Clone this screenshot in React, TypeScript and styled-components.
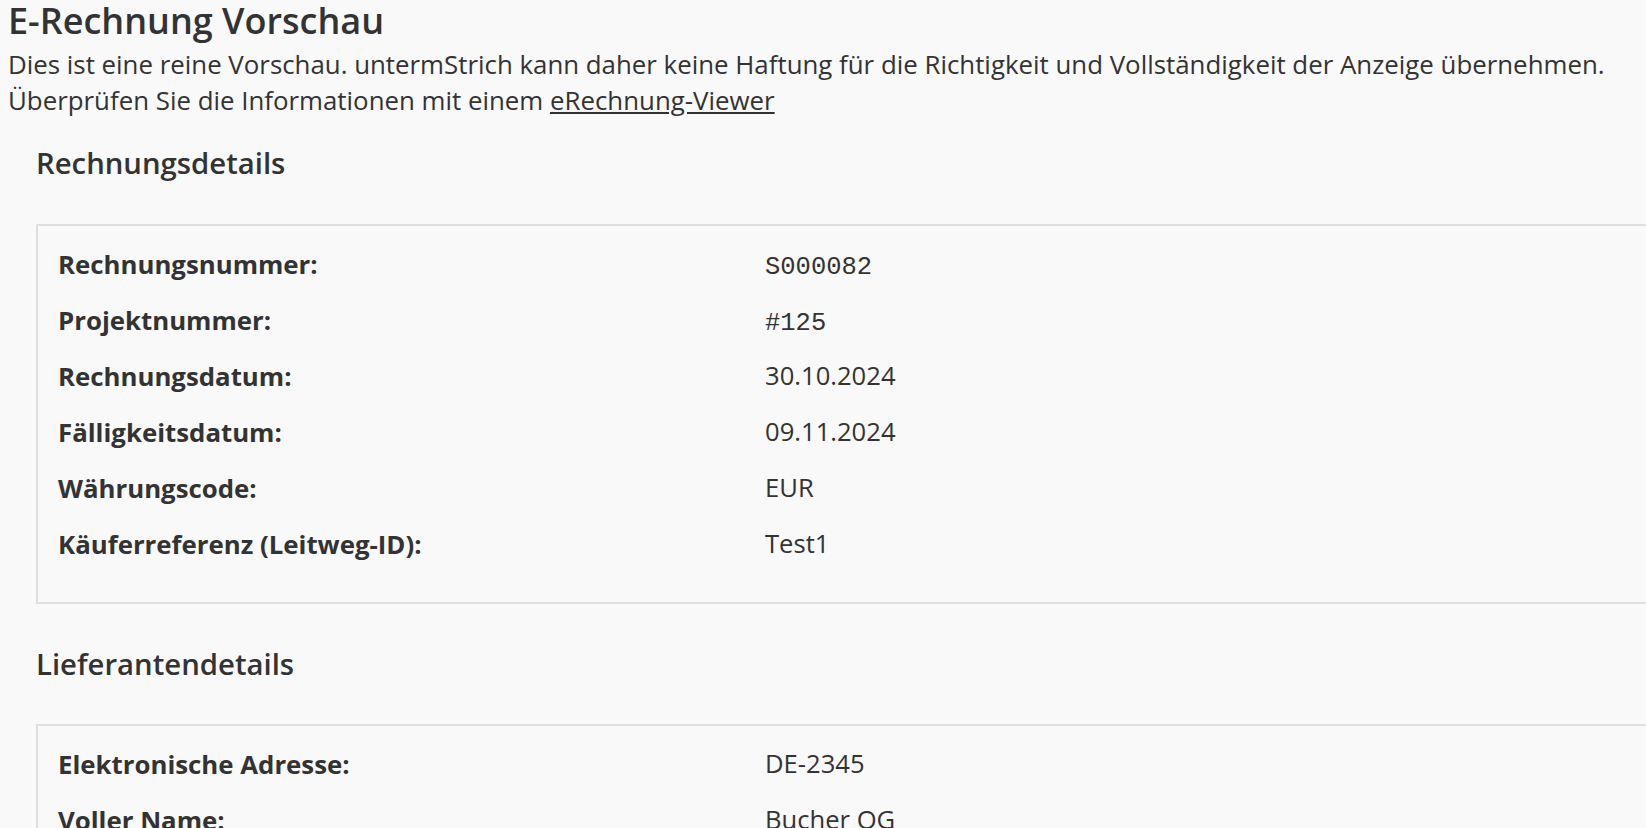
import React from "react";
import styled, { createGlobalStyle } from "styled-components";

const GlobalStyle = createGlobalStyle`
  html, body {
    margin: 0;
    padding: 0;
    overflow: hidden;
    background: #f9f9f9;
  }
  body {
    font-family: "Open Sans", "Liberation Sans", sans-serif;
    color: #333333;
  }
`;

const Page = styled.div`
  padding: 0 8px;
  width: 1800px;
`;

const Title = styled.h1`
  margin: 0;
  font-size: 36px;
  font-weight: 600;
  line-height: 42px;
  color: #333333;
`;

const Intro = styled.p`
  margin: 4px 0 0;
  font-size: 25.85px;
  line-height: 36px;

  a {
    color: #333333;
    text-decoration: underline;
  }
`;

const Section = styled.section`
  padding-top: 28px;
  margin-left: 28px;
`;

const SectionTitle = styled.h2`
  margin: 0 0 43px;
  font-size: 29.3px;
  font-weight: 600;
  line-height: 34.5px;
`;

const DetailBox = styled.div`
  border: 2px solid #dedede;
  padding: 10px 20px 30px;
  margin-bottom: 15px;
  display: grid;
  grid-template-columns: 707px 1fr;
`;

const Label = styled.div`
  font-size: 25.8px;
  font-weight: 700;
  line-height: 36px;
  padding: 10px 0;
`;

const Value = styled.div<{ $mono?: boolean }>`
  font-size: ${(p) => (p.$mono ? "25.5px" : "25.6px")};
  font-family: ${(p) =>
    p.$mono ? '"Liberation Mono", "Courier New", monospace' : "inherit"};
  line-height: 36px;
  padding: ${(p) => (p.$mono ? "14px 0 6px" : "10px 0")};
`;

interface Detail {
  label: string;
  value: string;
  mono?: boolean;
}

const invoiceDetails: Detail[] = [
  { label: "Rechnungsnummer:", value: "S000082", mono: true },
  { label: "Projektnummer:", value: "#125", mono: true },
  { label: "Rechnungsdatum:", value: "30.10.2024" },
  { label: "Fälligkeitsdatum:", value: "09.11.2024" },
  { label: "Währungscode:", value: "EUR" },
  { label: "Käuferreferenz (Leitweg-ID):", value: "Test1" },
];

const supplierDetails: Detail[] = [
  { label: "Elektronische Adresse:", value: "DE-2345" },
  { label: "Voller Name:", value: "Bucher OG" },
  { label: "Straße:", value: "Hauptstraße 1" },
];

const DetailSection = ({ title, items }: { title: string; items: Detail[] }) => (
  <Section>
    <SectionTitle>{title}</SectionTitle>
    <DetailBox>
      {items.map((item) => (
        <React.Fragment key={item.label}>
          <Label>{item.label}</Label>
          <Value $mono={item.mono}>{item.value}</Value>
        </React.Fragment>
      ))}
    </DetailBox>
  </Section>
);

const App = () => {
  return (
    <>
      <GlobalStyle />
      <Page>
        <Title>E-Rechnung Vorschau</Title>
        <Intro>
          Dies ist eine reine Vorschau. untermStrich kann daher keine Haftung
          für die Richtigkeit und Vollständigkeit der Anzeige übernehmen.
          <br />
          Überprüfen Sie die Informationen mit einem{" "}
          <a href="#viewer">eRechnung-Viewer</a>
        </Intro>
        <DetailSection title="Rechnungsdetails" items={invoiceDetails} />
        <DetailSection title="Lieferantendetails" items={supplierDetails} />
      </Page>
    </>
  );
};

export default App;
